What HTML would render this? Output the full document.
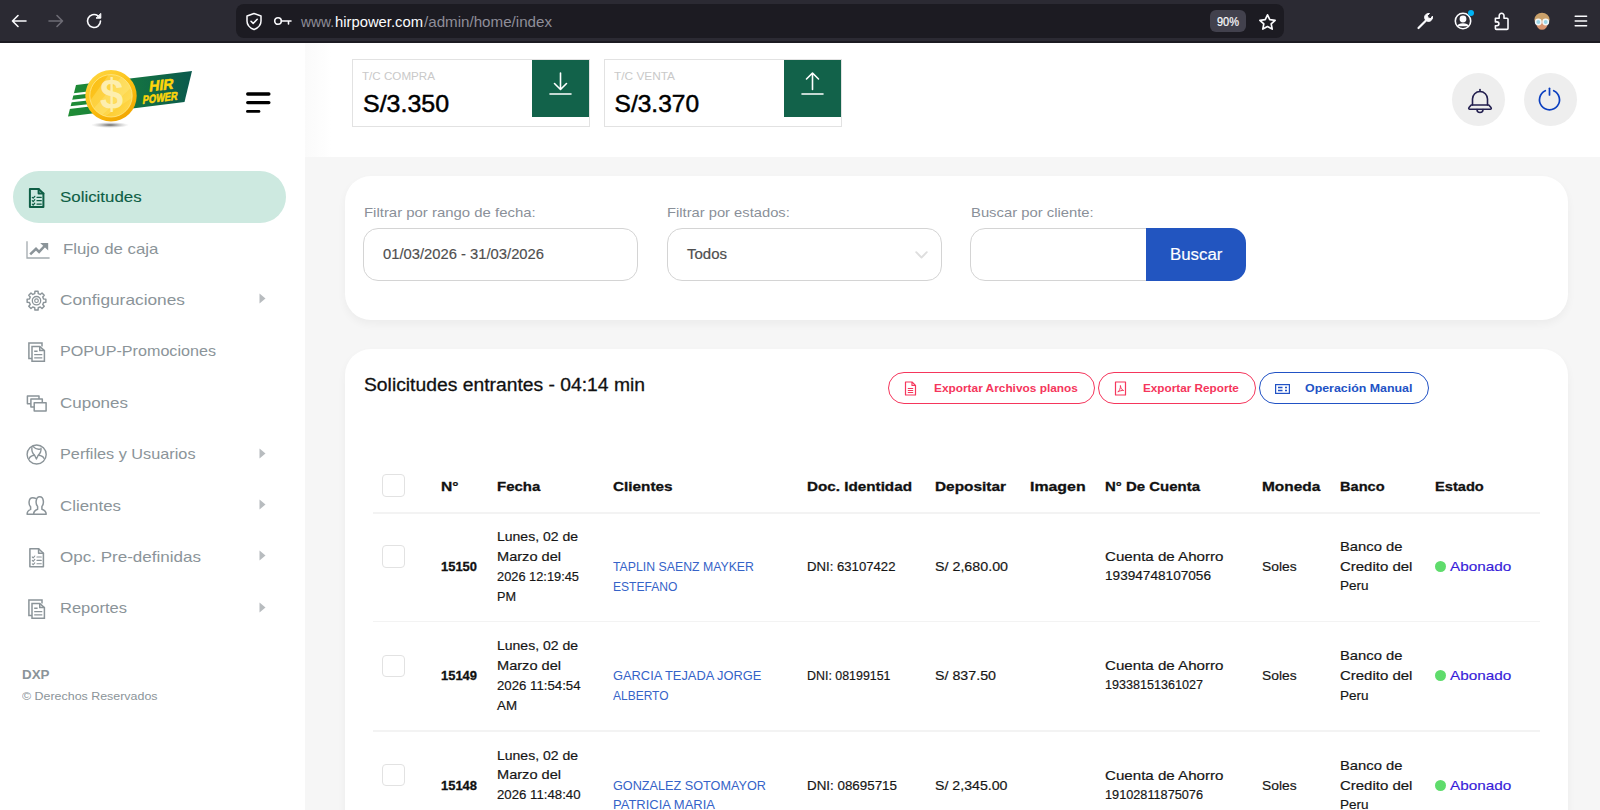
<!DOCTYPE html>
<html lang="es"><head><meta charset="utf-8"><title>HirPower Admin</title>
<style>
*{box-sizing:border-box;margin:0;padding:0}
html,body{width:1600px;height:810px;overflow:hidden;background:#f6f6f6;font-family:"Liberation Sans",sans-serif;}
.t{position:absolute;white-space:pre;display:block;transform-origin:0 50%}
.abs{position:absolute}
#chrome{position:absolute;left:0;top:0;width:1600px;height:43px;background:#2b2a33;border-bottom:2px solid #1b1a22}
#url{position:absolute;left:236px;top:4px;width:1048px;height:34px;border-radius:8px;background:#1c1b22}
#side{position:absolute;left:0;top:43px;width:305px;height:767px;background:#fff}
#head{position:absolute;left:305px;top:43px;width:1295px;height:114px;background:#fff}
.card{position:absolute;background:#fff;border-radius:26px;box-shadow:0 4px 9px rgba(0,0,0,.045)}
.tc{position:absolute;top:59px;height:68px;width:238px;border:1px solid #e2e2e2;background:#fff}
.tc i{position:absolute;right:0;top:0;width:57px;height:57px;background:#12624a;display:block}
.inp{position:absolute;top:228px;height:53px;border:1px solid #d4d4d4;border-radius:15px;background:#fff}
.cb{position:absolute;left:382.200px;width:22.600px;height:22.600px;border:1.500px solid #e2e2e2;border-radius:4px;background:#fff}
.hr{position:absolute;left:373px;width:1167px;height:1.500px;background:#f3f3f3}
.pill{position:absolute;top:372px;height:32px;border-radius:16px;border:1px solid #f5365c;background:#fff}
.circ{position:absolute;top:73px;width:53px;height:53px;border-radius:50%;background:#eeeeee}
.dot{position:absolute;left:1435px;width:11px;height:11px;border-radius:50%;background:#5fdc6c}
svg{position:absolute;overflow:visible}
#root{position:absolute;left:0;top:0;width:1600px;height:810px;overflow:hidden;background:#f6f6f6}
</style></head><body><div id="root">
<div id="chrome"><div id="url"></div>
<svg style="left:10px;top:12px" width="18" height="18" viewBox="0 0 18 18" fill="none" stroke="#fbfbfe" stroke-width="1.6" stroke-linecap="round" stroke-linejoin="round"><path d="M16 9H2.5M8 3.5L2.5 9 8 14.500"/></svg>
<svg style="left:47px;top:12px" width="18" height="18" viewBox="0 0 18 18" fill="none" stroke="#6d6c75" stroke-width="1.6" stroke-linecap="round" stroke-linejoin="round"><path d="M2 9h13.500M10 3.500L15.500 9 10 14.500"/></svg>
<svg style="left:85px;top:12px" width="18" height="18" viewBox="0 0 18 18" fill="none" stroke="#fbfbfe" stroke-width="1.6" stroke-linecap="round" stroke-linejoin="round"><path d="M15.500 9A6.500 6.500 0 1 1 12.800 3.700"/><path d="M15.800 1.800v4.400h-4.400z" fill="#fbfbfe" stroke-width="1"/></svg>
<svg style="left:245px;top:12px" width="18" height="19" viewBox="0 0 18 19" fill="none" stroke="#fbfbfe" stroke-width="1.5" stroke-linejoin="round" stroke-linecap="round"><path d="M9 1.500L2 4v5c0 4 3 7 7 8.500 4-1.500 7-4.500 7-8.500V4z"/><path d="M6 9.200l2.200 2.200 4-4.200"/></svg>
<svg style="left:273px;top:14px" width="20" height="14" viewBox="0 0 20 14" fill="none" stroke="#fbfbfe" stroke-width="1.6" stroke-linecap="round"><circle cx="5" cy="7" r="3.300"/><path d="M8.500 7H18M15.500 7v3"/></svg>
<span class="t" style="left:301.00px;top:12.48px;font-size:14.5px;line-height:20px;color:#8f8e99;transform:scaleX(0.9526);">www.</span>
<span class="t" style="left:335.00px;top:12.48px;font-size:14.5px;line-height:20px;color:#fbfbfe;transform:scaleX(1.0205);">hirpower.com</span>
<span class="t" style="left:424.00px;top:12.48px;font-size:14.5px;line-height:20px;color:#8f8e99;transform:scaleX(1.0448);">/admin/home/index</span>
<div class="abs" style="left:1209.600px;top:10px;width:36.800px;height:22px;border-radius:6px;background:#42414d"></div>
<span class="t" style="left:1216.80px;top:11.84px;font-size:12px;line-height:20px;color:#fbfbfe;transform:scaleX(0.9160);-webkit-text-stroke:0.2px #fbfbfe;">90%</span>
<svg style="left:1258px;top:13.200px" width="19" height="18" viewBox="0 0 19 18" fill="none" stroke="#fbfbfe" stroke-width="1.700" stroke-linejoin="round"><path d="M9.500 1.800l2.300 4.800 5.300.700-3.900 3.600 1 5.200-4.700-2.600-4.700 2.600 1-5.200L1.900 7.300l5.300-.700z"/></svg>
<svg style="left:1416px;top:12px" width="19" height="18" viewBox="0 0 19 18" fill="none" stroke="#fbfbfe" stroke-width="2.200" stroke-linecap="round"><path d="M2.500 16L10 8.500"/><path d="M16.500 4.500a4 4 0 1 1-3-3l-2 2 .5 2.500 2.500.5z" fill="#fbfbfe" stroke-width="1"/></svg>
<svg style="left:1454px;top:12px" width="18" height="18" viewBox="0 0 18 18" fill="none" stroke="#fbfbfe" stroke-width="1.600"><circle cx="9" cy="9" r="7.700"/><circle cx="9" cy="7" r="2.600" fill="#fbfbfe"/><path d="M4 14.300c1-3 9-3 10 0" fill="#fbfbfe"/></svg>
<div class="abs" style="left:1468px;top:10px;width:6px;height:6px;border-radius:50%;background:#00b3f4"></div>
<svg style="left:1493px;top:11px" width="18" height="20" viewBox="0 0 18 20" fill="none" stroke="#fbfbfe" stroke-width="1.600" stroke-linejoin="round"><path d="M2.400 7.300H6.200V4.700a2.400 2.400 0 1 1 4.800 0V7.300H14a1 1 0 0 1 1 1V17.400a1 1 0 0 1-1 1H3.400a1 1 0 0 1-1-1V14.700H4a1.900 1.900 0 0 0 0-3.800H2.400z"/></svg>
<svg style="left:1532.500px;top:11.500px" width="18" height="19" viewBox="0 0 18 19"><ellipse cx="9" cy="7.500" rx="7.600" ry="6.800" fill="#c9a06a"/><ellipse cx="9" cy="11.500" rx="5.700" ry="6.300" fill="#d9946e"/><path d="M3 6.500c2-3 10-3 12 0l-1 2.500H4z" fill="#c9a06a"/><circle cx="5.300" cy="10" r="2.700" fill="#9ad4e6" stroke="#f2f6f8" stroke-width="1.500"/><circle cx="12.700" cy="10" r="2.700" fill="#9ad4e6" stroke="#f2f6f8" stroke-width="1.500"/></svg>
<svg style="left:1574px;top:14px" width="14" height="14" viewBox="0 0 14 14" stroke="#fbfbfe" stroke-width="1.500" stroke-linecap="round"><path d="M1.200 2.200h11.400M1.200 7h11.400M1.200 11.800h11.400"/></svg>
</div>
<div id="side"></div><div id="head"><div class="abs" style="left:0;top:0;width:26px;height:114px;background:linear-gradient(90deg,#fafafa,#fff)"></div></div>
<svg style="left:50px;top:55px" width="160" height="80" viewBox="0 0 160 80">
<defs>
<linearGradient id="gb" x1="0" y1="0" x2="1" y2="0"><stop offset="0" stop-color="#1f8d35"/><stop offset=".45" stop-color="#167840"/><stop offset="1" stop-color="#0a594d"/></linearGradient>
<linearGradient id="gr" x1="0.2" y1="0" x2="0.8" y2="1"><stop offset="0" stop-color="#ffd640"/><stop offset=".55" stop-color="#fbbd0e"/><stop offset="1" stop-color="#f0a300"/></linearGradient>
<linearGradient id="gc" x1="0" y1="0.2" x2="1" y2="0.8"><stop offset="0" stop-color="#fbbf14"/><stop offset=".5" stop-color="#fdc828"/><stop offset="1" stop-color="#ffd94e"/></linearGradient>
<radialGradient id="gs" cx=".5" cy=".5" r=".5"><stop offset="0" stop-color="#444" stop-opacity=".85"/><stop offset=".6" stop-color="#888" stop-opacity=".35"/><stop offset="1" stop-color="#aaa" stop-opacity="0"/></radialGradient>
<clipPath id="cc"><circle cx="61" cy="40.800" r="21.200"/></clipPath>
</defs>
<ellipse cx="60" cy="70" rx="19" ry="3" fill="url(#gs)"/>
<path d="M26 30L142 16 134.500 47 18 61.500z" fill="url(#gb)"/>
<path d="M15 39.300L40 36.300 40 38.500 15 41.500zM13 45.800L40 42.800 40 45.200 13 48.200zM11 52.300L40 49 40 51.600 11 55z" fill="#fff"/>
<circle cx="61" cy="40.800" r="25.700" fill="url(#gr)"/>
<circle cx="61" cy="40.800" r="21.200" fill="url(#gc)"/>
<g clip-path="url(#cc)"><path d="M62 15L100 15 100 30 40 72 30 60z" fill="#ffe773" opacity=".38"/><path d="M75 18L90 24 46 66 38 60z" fill="#fff3a0" opacity=".25"/></g>
<circle cx="61" cy="40.800" r="21.200" fill="none" stroke="#ffe98c" stroke-width=".9" opacity=".85"/>
<text x="61.700" y="54" font-family="Liberation Sans, sans-serif" font-weight="700" font-size="42" text-anchor="middle" fill="#fdf0b4" opacity=".95">$</text>
<g transform="rotate(-7 112 36) skewX(-14)" font-family="Liberation Sans, sans-serif" font-weight="700" fill="#ffd60a" stroke="#ffd60a" stroke-width=".55">
<text x="107.500" y="35" font-size="14.500" textLength="24.500" lengthAdjust="spacingAndGlyphs">HIR</text>
<text x="102.500" y="46.500" font-size="11.500" textLength="35" lengthAdjust="spacingAndGlyphs">POWER</text>
</g>
</svg>
<svg style="left:244px;top:90px" width="30" height="26" viewBox="0 0 30 26" stroke="#000" stroke-width="3.300" stroke-linecap="round"><path d="M3.700 4h21.200M3.700 12.600h21.200"/><path d="M3.400 21.400h11.600" stroke-width="2.700"/></svg>
<div class="abs" style="left:12.600px;top:171.300px;width:273.800px;height:51.300px;border-radius:26px;background:#cde9e0"></div>
<span class="t" style="left:60.00px;top:187.40px;font-size:15px;line-height:20px;color:#0e5e45;transform:scaleX(1.1249);-webkit-text-stroke:0.12px #0e5e45;">Solicitudes</span>
<span class="t" style="left:63.00px;top:238.70px;font-size:15px;line-height:20px;color:#8b9499;transform:scaleX(1.1217);">Flujo de caja</span>
<span class="t" style="left:60.00px;top:290.10px;font-size:15px;line-height:20px;color:#8b9499;transform:scaleX(1.1531);">Configuraciones</span>
<svg style="left:259px;top:293.2px" width="7" height="11" viewBox="0 0 7 11"><path d="M.5.500L6.500 5.500.5 10.500z" fill="#b8bcbf"/></svg>
<span class="t" style="left:60.00px;top:341.40px;font-size:15px;line-height:20px;color:#8b9499;transform:scaleX(1.0755);">POPUP-Promociones</span>
<span class="t" style="left:60.00px;top:392.80px;font-size:15px;line-height:20px;color:#8b9499;transform:scaleX(1.1325);">Cupones</span>
<span class="t" style="left:60.00px;top:444.40px;font-size:15px;line-height:20px;color:#8b9499;transform:scaleX(1.0837);">Perfiles y Usuarios</span>
<svg style="left:259px;top:447.5px" width="7" height="11" viewBox="0 0 7 11"><path d="M.5.500L6.500 5.500.5 10.500z" fill="#b8bcbf"/></svg>
<span class="t" style="left:60.00px;top:495.70px;font-size:15px;line-height:20px;color:#8b9499;transform:scaleX(1.1256);">Clientes</span>
<svg style="left:259px;top:498.8px" width="7" height="11" viewBox="0 0 7 11"><path d="M.5.500L6.500 5.500.5 10.500z" fill="#b8bcbf"/></svg>
<span class="t" style="left:60.00px;top:547.10px;font-size:15px;line-height:20px;color:#8b9499;transform:scaleX(1.1350);">Opc. Pre-definidas</span>
<svg style="left:259px;top:550.2px" width="7" height="11" viewBox="0 0 7 11"><path d="M.5.500L6.500 5.500.5 10.500z" fill="#b8bcbf"/></svg>
<span class="t" style="left:60.00px;top:598.40px;font-size:15px;line-height:20px;color:#8b9499;transform:scaleX(1.1008);">Reportes</span>
<svg style="left:259px;top:601.5px" width="7" height="11" viewBox="0 0 7 11"><path d="M.5.500L6.500 5.500.5 10.500z" fill="#b8bcbf"/></svg>
<svg style="left:0;top:0" width="305" height="810" viewBox="0 0 305 810">
<g fill="none" stroke="#0e5e45" stroke-width="2.0" stroke-linejoin="round" stroke-linecap="round"><path d="M29.9,189.10 H38.6 L43.4,193.60 V207.10 H29.9 Z"/><path d="M38.6,189.10 V193.60 H43.4"/><g stroke-width="1.2"><path d="M32.3,197.30 l0.9,0.9 l1.6,-1.9"/><path d="M37,197.30 H41.3"/><path d="M32.3,200.70 l0.9,0.9 l1.6,-1.9"/><path d="M37,200.70 H41.3"/><path d="M32.3,204.10 l0.9,0.9 l1.6,-1.9"/><path d="M37,204.10 H41.3"/></g></g>
<g fill="none" stroke-linejoin="miter"><path d="M27,241.3 V258 H49.6" stroke="#a3aaae" stroke-width="1.3"/><path d="M30.2,254.4 L36,248.8 L39.1,251.9 L44.6,246" stroke="#8b9499" stroke-width="2.5"/><path d="M40.2,243 H48.2 V250.4 Z" fill="#8b9499" stroke="none"/></g>
<g fill="none" stroke="#8b9499" stroke-width="1.45" stroke-linejoin="round"><path d="M34.74,293.62 L34.94,291.33 L38.06,291.33 L38.26,293.62 L40.27,294.45 L42.02,292.97 L44.23,295.18 L42.75,296.93 L43.58,298.94 L45.87,299.14 L45.87,302.26 L43.58,302.46 L42.75,304.47 L44.23,306.22 L42.02,308.43 L40.27,306.95 L38.26,307.78 L38.06,310.07 L34.94,310.07 L34.74,307.78 L32.73,306.95 L30.98,308.43 L28.77,306.22 L30.25,304.47 L29.42,302.46 L27.13,302.26 L27.13,299.14 L29.42,298.94 L30.25,296.93 L28.77,295.18 L30.98,292.97 L32.73,294.45Z"/><circle cx="36.5" cy="300.7" r="4.2" stroke-width="1.3"/><circle cx="36.5" cy="300.7" r="1.8" stroke-width="1.2"/></g>
<g fill="none" stroke="#8b9499" stroke-width="1.5" stroke-linejoin="miter"><path d="M42,346.40 V343.00 H28.9 V358.50 H32"/><path d="M32,346.40 H39.75 L44.4,350.60 V361.20 H32 Z" fill="#fff"/><path d="M39.75,346.40 V350.60 H44.4"/><path d="M34.2,351.20 H37.6 M34.2,354.60 H42.3 M34.2,357.90 H42.3" stroke-width="1.4"/></g>
<g fill="#fff" stroke="#8b9499" stroke-width="1.5" stroke-linejoin="round"><rect x="27.4" y="395.9" width="11.6" height="7.9"/><rect x="30.9" y="399.1" width="11.4" height="7.9"/><rect x="34.2" y="402.8" width="11.9" height="8.2"/></g>
<g fill="none" stroke="#8b9499" stroke-width="1.4" stroke-linecap="round" stroke-linejoin="round"><circle cx="36.65" cy="454.5" r="9.55"/><path d="M31.900,447.800 C31.600,450.600 32.100,453.200 34.600,455.200 L36.400,459 L38.200,455.200 C40.700,453.200 41.200,450.600 41,448.300"/><path d="M33.200,446.600 C35,448.600 37.500,449.700 40.100,449.100"/><path d="M29.2,458.6 C30,456.5 32,455.6 34.4,455.3 M44.1,458.6 C43.3,456.5 41.3,455.6 38.5,455.3"/></g>
<g fill="none" stroke="#8b9499" stroke-width="1.5" stroke-linejoin="round" stroke-linecap="round"><path d="M35.6,498.3 C34.8,497.8 33.7,497.7 32.7,497.7 C28.2,497.7 28.4,504.8 30.6,506.9 L30.6,509.4 C28.5,510.2 27.1,511.5 27.1,514.2 L33.6,514.2"/><path d="M37.6,506.5 C35.4,504.5 35.3,496.8 39.75,496.8 C44.2,496.8 44.1,504.5 41.9,506.500 L41.9,509.2 C44,510 46.2,511.2 46.2,514.2 L33.6,514.2 C33.6,511.5 35.500,510 37.6,509.2 Z" fill="#fff"/></g>
<g fill="none" stroke="#8b9499" stroke-width="1.55" stroke-linejoin="round" stroke-linecap="round"><path d="M29.9,548.80 H38.6 L43.4,553.30 V566.80 H29.9 Z"/><path d="M38.6,548.80 V553.30 H43.4"/><g stroke-width="1.1"><path d="M32.3,557.00 l0.9,0.9 l1.6,-1.9"/><path d="M37,557.00 H41.3"/><path d="M32.3,560.40 l0.9,0.9 l1.6,-1.9"/><path d="M37,560.40 H41.3"/><path d="M32.3,563.80 l0.9,0.9 l1.6,-1.9"/><path d="M37,563.80 H41.3"/></g></g>
<g fill="none" stroke="#8b9499" stroke-width="1.5" stroke-linejoin="miter"><path d="M42,603.40 V600.00 H28.9 V615.50 H32"/><path d="M32,603.40 H39.75 L44.4,607.60 V618.20 H32 Z" fill="#fff"/><path d="M39.75,603.40 V607.60 H44.4"/><path d="M34.2,608.20 H37.6 M34.2,611.60 H42.3 M34.2,614.90 H42.3" stroke-width="1.4"/></g>
</svg>
<span class="t" style="left:22.00px;top:664.50px;font-size:13px;line-height:20px;color:#8b9499;font-weight:700;transform:scaleX(1.0288);">DXP</span>
<span class="t" style="left:22.00px;top:686.02px;font-size:11.5px;line-height:20px;color:#8b9499;transform:scaleX(1.0802);">© Derechos Reservados</span>
<div class="tc" style="left:352px"><i></i></div>
<span class="t" style="left:362.30px;top:66.39px;font-size:11px;line-height:20px;color:#c9c9c9;transform:scaleX(1.0571);">T/C COMPRA</span>
<span class="t" style="left:362.60px;top:94.21px;font-size:24.5px;line-height:20px;color:#000;transform:scaleX(1.0183);-webkit-text-stroke:0.5px #000;">S/3.350</span>
<div class="tc" style="left:604px"><i></i></div>
<span class="t" style="left:614.30px;top:66.39px;font-size:11px;line-height:20px;color:#c9c9c9;transform:scaleX(1.0771);">T/C VENTA</span>
<span class="t" style="left:614.60px;top:94.21px;font-size:24.5px;line-height:20px;color:#000;-webkit-text-stroke:0.5px #000;">S/3.370</span>
<svg style="left:548px;top:71px" width="25" height="25" viewBox="0 0 25 25" fill="none" stroke="#fff" stroke-width="1.600" stroke-linecap="round" stroke-linejoin="round"><path d="M12.500 2v16M6.500 12.500l6 6 6-6M2 23h21"/></svg>
<svg style="left:800px;top:71px" width="25" height="25" viewBox="0 0 25 25" fill="none" stroke="#fff" stroke-width="1.600" stroke-linecap="round" stroke-linejoin="round"><path d="M12.500 18.500v-16M6.500 8l6-6 6 6M2 23h21"/></svg>
<div class="circ" style="left:1452px"></div><div class="circ" style="left:1524.200px"></div>
<svg style="left:1467px;top:88px" width="26" height="26" viewBox="0 0 26 26" fill="none" stroke="#231f4f" stroke-width="1.600" stroke-linecap="round" stroke-linejoin="round"><path d="M13 1.500v2"/><path d="M5.500 17v-6a7.500 7.500 0 0 1 15 0v6"/><path d="M4.200 17H21.800L24 19.600a1 1 0 0 1-.8 1.700H2.800a1 1 0 0 1-.8-1.700z"/><path d="M10 21.500a3 3 0 0 0 6 0"/></svg>
<svg style="left:1536.500px;top:86px" width="26" height="26" viewBox="0 0 26 26" fill="none" stroke="#0b3fc0" stroke-width="1.700" stroke-linecap="round"><path d="M12.500 2.300v6.700"/><path d="M8.300 4.700a10 10 0 1 0 8.400 0"/></svg>
<div class="card" style="left:344.500px;top:176px;width:1223.500px;height:144px"></div>
<span class="t" style="left:363.50px;top:203.09px;font-size:13.3px;line-height:20px;color:#8a9099;transform:scaleX(1.1220);">Filtrar por rango de fecha:</span>
<span class="t" style="left:667.00px;top:203.09px;font-size:13.3px;line-height:20px;color:#8a9099;transform:scaleX(1.1076);">Filtrar por estados:</span>
<span class="t" style="left:970.60px;top:203.09px;font-size:13.3px;line-height:20px;color:#8a9099;transform:scaleX(1.1140);">Buscar por cliente:</span>
<div class="inp" style="left:362.700px;width:275.800px"></div>
<div class="inp" style="left:667px;width:274.500px"></div>
<div class="inp" style="left:970.200px;width:200px"></div>
<div class="abs" style="left:1145.500px;top:228px;width:100px;height:53px;background:#2255c0;border-radius:0 15px 15px 0"></div>
<span class="t" style="left:383.00px;top:243.95px;font-size:14px;line-height:20px;color:#4f4f4f;transform:scaleX(1.0552);-webkit-text-stroke:0.15px #4f4f4f;">01/03/2026 - 31/03/2026</span>
<span class="t" style="left:686.80px;top:243.95px;font-size:14px;line-height:20px;color:#4f4f4f;transform:scaleX(1.0707);-webkit-text-stroke:0.2px #4f4f4f;">Todos</span>
<svg style="left:914.500px;top:250.500px" width="13" height="8" viewBox="0 0 13 8" fill="none" stroke="#dedede" stroke-width="1.900" stroke-linecap="round" stroke-linejoin="round"><path d="M1.200 1.200l5.300 5.300 5.300-5.300"/></svg>
<span class="t" style="left:1169.50px;top:245.19px;font-size:15.6px;line-height:20px;color:#fff;transform:scaleX(1.0792);-webkit-text-stroke:0.15px #fff;">Buscar</span>
<div class="card" style="left:344.500px;top:348.500px;width:1223.500px;height:520px"></div>
<span class="t" style="left:363.50px;top:375.44px;font-size:17.5px;line-height:20px;color:#111;transform:scaleX(1.1026);-webkit-text-stroke:0.28px #111;">Solicitudes entrantes - 04:14 min</span>
<div class="pill" style="left:888px;width:206.500px"></div>
<div class="pill" style="left:1098px;width:158px"></div>
<div class="pill" style="left:1259px;width:170px;border-color:#2152c5"></div>
<span class="t" style="left:934.00px;top:378.35px;font-size:11.7px;line-height:20px;color:#f5365c;font-weight:700;transform:scaleX(1.0144);">Exportar Archivos planos</span>
<span class="t" style="left:1143.40px;top:378.35px;font-size:11.7px;line-height:20px;color:#f5365c;font-weight:700;transform:scaleX(1.0045);">Exportar Reporte</span>
<span class="t" style="left:1305.00px;top:378.35px;font-size:11.7px;line-height:20px;color:#2152c5;font-weight:700;transform:scaleX(1.0599);">Operación Manual</span>
<svg style="left:904px;top:381px" width="13" height="15" viewBox="0 0 13 15" fill="none" stroke="#f5365c" stroke-width="1.200" stroke-linejoin="round"><path d="M1.500 1h6.500l3.500 3.500V14h-10z"/><path d="M8 1v3.500h3.500"/><path d="M3.800 7.500h5.400M3.800 9.500h5.400M3.800 11.500h5.400" stroke-width="1"/></svg>
<svg style="left:1113.500px;top:381px" width="13" height="15" viewBox="0 0 13 15" fill="none" stroke="#f5365c" stroke-width="1.200" stroke-linejoin="round"><rect x="1.500" y="1" width="10" height="13"/><path d="M3.800 11c1.500-1 3-4 2.600-6.500M6.400 4.500c.2 2.500 1.600 4.500 3.200 5M3.800 11c1.800-1.200 4-1.700 5.800-1.500" stroke-width="1"/></svg>
<svg style="left:1274.500px;top:383.500px" width="15" height="10" viewBox="0 0 15 10" fill="none" stroke="#2152c5" stroke-width="1.200"><rect x=".6" y=".6" width="13.800" height="8.800"/><path d="M3 3.500h4.500M3 6.500h4.500M10 3.500h2M10 6.500h2" stroke-width="1.400"/></svg>
<div class="cb" style="top:474.200px"></div>
<span class="t" style="left:441.00px;top:476.99px;font-size:13.6px;line-height:20px;color:#111;font-weight:700;transform:scaleX(1.1468);-webkit-text-stroke:0.3px #111;">N°</span>
<span class="t" style="left:497.00px;top:476.99px;font-size:13.6px;line-height:20px;color:#111;font-weight:700;transform:scaleX(1.1016);-webkit-text-stroke:0.3px #111;">Fecha</span>
<span class="t" style="left:613.00px;top:476.99px;font-size:13.6px;line-height:20px;color:#111;font-weight:700;transform:scaleX(1.1246);-webkit-text-stroke:0.3px #111;">Clientes</span>
<span class="t" style="left:807.00px;top:476.99px;font-size:13.6px;line-height:20px;color:#111;font-weight:700;transform:scaleX(1.1207);-webkit-text-stroke:0.3px #111;">Doc. Identidad</span>
<span class="t" style="left:935.00px;top:476.99px;font-size:13.6px;line-height:20px;color:#111;font-weight:700;transform:scaleX(1.1319);-webkit-text-stroke:0.3px #111;">Depositar</span>
<span class="t" style="left:1030.00px;top:476.99px;font-size:13.6px;line-height:20px;color:#111;font-weight:700;transform:scaleX(1.1677);-webkit-text-stroke:0.3px #111;">Imagen</span>
<span class="t" style="left:1105.00px;top:476.99px;font-size:13.6px;line-height:20px;color:#111;font-weight:700;transform:scaleX(1.1009);-webkit-text-stroke:0.3px #111;">N° De Cuenta</span>
<span class="t" style="left:1262.00px;top:476.99px;font-size:13.6px;line-height:20px;color:#111;font-weight:700;transform:scaleX(1.1347);-webkit-text-stroke:0.3px #111;">Moneda</span>
<span class="t" style="left:1339.70px;top:476.99px;font-size:13.6px;line-height:20px;color:#111;font-weight:700;transform:scaleX(1.0730);-webkit-text-stroke:0.3px #111;">Banco</span>
<span class="t" style="left:1434.80px;top:476.99px;font-size:13.6px;line-height:20px;color:#111;font-weight:700;transform:scaleX(1.0763);-webkit-text-stroke:0.3px #111;">Estado</span>
<div class="hr" style="top:512px"></div>
<div class="cb" style="top:545.3px"></div>
<span class="t" style="left:441.00px;top:557.19px;font-size:13.6px;line-height:20px;color:#111;font-weight:700;transform:scaleX(0.9519);-webkit-text-stroke:0.3px #111;">15150</span>
<span class="t" style="left:497.00px;top:527.00px;font-size:13.0px;line-height:20px;color:#161616;transform:scaleX(1.0775);-webkit-text-stroke:0.18px #161616;">Lunes, 02 de</span>
<span class="t" style="left:497.00px;top:546.90px;font-size:13.0px;line-height:20px;color:#161616;transform:scaleX(1.1213);-webkit-text-stroke:0.18px #161616;">Marzo del</span>
<span class="t" style="left:497.00px;top:566.80px;font-size:13.0px;line-height:20px;color:#161616;transform:scaleX(0.9863);-webkit-text-stroke:0.18px #161616;">2026 12:19:45</span>
<span class="t" style="left:497.00px;top:586.70px;font-size:13.0px;line-height:20px;color:#161616;transform:scaleX(0.9743);-webkit-text-stroke:0.18px #161616;">PM</span>
<span class="t" style="left:613.00px;top:557.13px;font-size:12.6px;line-height:20px;color:#3563c8;transform:scaleX(0.9760);">TAPLIN SAENZ MAYKER</span>
<span class="t" style="left:613.00px;top:576.73px;font-size:12.6px;line-height:20px;color:#3563c8;transform:scaleX(0.9596);">ESTEFANO</span>
<span class="t" style="left:807.00px;top:557.00px;font-size:13.0px;line-height:20px;color:#161616;transform:scaleX(1.0120);-webkit-text-stroke:0.18px #161616;">DNI: 63107422</span>
<span class="t" style="left:935.00px;top:557.00px;font-size:13.0px;line-height:20px;color:#161616;transform:scaleX(1.0978);-webkit-text-stroke:0.18px #161616;">S/ 2,680.00</span>
<span class="t" style="left:1105.00px;top:547.00px;font-size:13.0px;line-height:20px;color:#161616;transform:scaleX(1.1628);-webkit-text-stroke:0.18px #161616;">Cuenta de Ahorro</span>
<span class="t" style="left:1105.00px;top:566.00px;font-size:13.0px;line-height:20px;color:#161616;transform:scaleX(1.0472);-webkit-text-stroke:0.18px #161616;">19394748107056</span>
<span class="t" style="left:1262.00px;top:557.00px;font-size:13.0px;line-height:20px;color:#161616;transform:scaleX(1.0640);-webkit-text-stroke:0.18px #161616;">Soles</span>
<span class="t" style="left:1340.00px;top:537.00px;font-size:13.0px;line-height:20px;color:#161616;transform:scaleX(1.1359);-webkit-text-stroke:0.18px #161616;">Banco de</span>
<span class="t" style="left:1340.00px;top:557.00px;font-size:13.0px;line-height:20px;color:#161616;transform:scaleX(1.1516);-webkit-text-stroke:0.18px #161616;">Credito del</span>
<span class="t" style="left:1340.00px;top:576.30px;font-size:13.0px;line-height:20px;color:#161616;transform:scaleX(1.0415);-webkit-text-stroke:0.18px #161616;">Peru</span>
<div class="dot" style="top:561.0px"></div>
<span class="t" style="left:1450.40px;top:557.00px;font-size:13.0px;line-height:20px;color:#371cd9;transform:scaleX(1.1758);-webkit-text-stroke:0.15px #371cd9;">Abonado</span>
<div class="hr" style="top:620.8px"></div>
<div class="cb" style="top:654.6px"></div>
<span class="t" style="left:441.00px;top:666.49px;font-size:13.6px;line-height:20px;color:#111;font-weight:700;transform:scaleX(0.9519);-webkit-text-stroke:0.3px #111;">15149</span>
<span class="t" style="left:497.00px;top:636.30px;font-size:13.0px;line-height:20px;color:#161616;transform:scaleX(1.0775);-webkit-text-stroke:0.18px #161616;">Lunes, 02 de</span>
<span class="t" style="left:497.00px;top:656.20px;font-size:13.0px;line-height:20px;color:#161616;transform:scaleX(1.1213);-webkit-text-stroke:0.18px #161616;">Marzo del</span>
<span class="t" style="left:497.00px;top:676.10px;font-size:13.0px;line-height:20px;color:#161616;transform:scaleX(1.0162);-webkit-text-stroke:0.18px #161616;">2026 11:54:54</span>
<span class="t" style="left:497.00px;top:696.00px;font-size:13.0px;line-height:20px;color:#161616;transform:scaleX(1.0256);-webkit-text-stroke:0.18px #161616;">AM</span>
<span class="t" style="left:613.00px;top:666.43px;font-size:12.6px;line-height:20px;color:#3563c8;transform:scaleX(1.0213);">GARCIA TEJADA JORGE</span>
<span class="t" style="left:613.00px;top:686.03px;font-size:12.6px;line-height:20px;color:#3563c8;transform:scaleX(0.9510);">ALBERTO</span>
<span class="t" style="left:807.00px;top:666.30px;font-size:13.0px;line-height:20px;color:#161616;transform:scaleX(0.9548);-webkit-text-stroke:0.18px #161616;">DNI: 08199151</span>
<span class="t" style="left:935.00px;top:666.30px;font-size:13.0px;line-height:20px;color:#161616;transform:scaleX(1.0960);-webkit-text-stroke:0.18px #161616;">S/ 837.50</span>
<span class="t" style="left:1105.00px;top:656.30px;font-size:13.0px;line-height:20px;color:#161616;transform:scaleX(1.1628);-webkit-text-stroke:0.18px #161616;">Cuenta de Ahorro</span>
<span class="t" style="left:1105.00px;top:675.30px;font-size:13.0px;line-height:20px;color:#161616;transform:scaleX(0.9682);-webkit-text-stroke:0.18px #161616;">19338151361027</span>
<span class="t" style="left:1262.00px;top:666.30px;font-size:13.0px;line-height:20px;color:#161616;transform:scaleX(1.0640);-webkit-text-stroke:0.18px #161616;">Soles</span>
<span class="t" style="left:1340.00px;top:646.30px;font-size:13.0px;line-height:20px;color:#161616;transform:scaleX(1.1359);-webkit-text-stroke:0.18px #161616;">Banco de</span>
<span class="t" style="left:1340.00px;top:666.30px;font-size:13.0px;line-height:20px;color:#161616;transform:scaleX(1.1516);-webkit-text-stroke:0.18px #161616;">Credito del</span>
<span class="t" style="left:1340.00px;top:685.60px;font-size:13.0px;line-height:20px;color:#161616;transform:scaleX(1.0415);-webkit-text-stroke:0.18px #161616;">Peru</span>
<div class="dot" style="top:670.3px"></div>
<span class="t" style="left:1450.40px;top:666.30px;font-size:13.0px;line-height:20px;color:#371cd9;transform:scaleX(1.1758);-webkit-text-stroke:0.15px #371cd9;">Abonado</span>
<div class="hr" style="top:730.1px"></div>
<div class="cb" style="top:763.8px"></div>
<span class="t" style="left:441.00px;top:775.69px;font-size:13.6px;line-height:20px;color:#111;font-weight:700;transform:scaleX(0.9519);-webkit-text-stroke:0.3px #111;">15148</span>
<span class="t" style="left:497.00px;top:745.50px;font-size:13.0px;line-height:20px;color:#161616;transform:scaleX(1.0775);-webkit-text-stroke:0.18px #161616;">Lunes, 02 de</span>
<span class="t" style="left:497.00px;top:765.40px;font-size:13.0px;line-height:20px;color:#161616;transform:scaleX(1.1213);-webkit-text-stroke:0.18px #161616;">Marzo del</span>
<span class="t" style="left:497.00px;top:785.30px;font-size:13.0px;line-height:20px;color:#161616;transform:scaleX(1.0162);-webkit-text-stroke:0.18px #161616;">2026 11:48:40</span>
<span class="t" style="left:497.00px;top:805.20px;font-size:13.0px;line-height:20px;color:#161616;transform:scaleX(1.0256);-webkit-text-stroke:0.18px #161616;">AM</span>
<span class="t" style="left:613.00px;top:775.63px;font-size:12.6px;line-height:20px;color:#3563c8;transform:scaleX(1.0056);">GONZALEZ SOTOMAYOR</span>
<span class="t" style="left:613.00px;top:795.23px;font-size:12.6px;line-height:20px;color:#3563c8;transform:scaleX(1.0308);">PATRICIA MARIA</span>
<span class="t" style="left:807.00px;top:775.50px;font-size:13.0px;line-height:20px;color:#161616;transform:scaleX(1.0291);-webkit-text-stroke:0.18px #161616;">DNI: 08695715</span>
<span class="t" style="left:935.00px;top:775.50px;font-size:13.0px;line-height:20px;color:#161616;transform:scaleX(1.0903);-webkit-text-stroke:0.18px #161616;">S/ 2,345.00</span>
<span class="t" style="left:1105.00px;top:765.50px;font-size:13.0px;line-height:20px;color:#161616;transform:scaleX(1.1628);-webkit-text-stroke:0.18px #161616;">Cuenta de Ahorro</span>
<span class="t" style="left:1105.00px;top:784.50px;font-size:13.0px;line-height:20px;color:#161616;transform:scaleX(0.9775);-webkit-text-stroke:0.18px #161616;">19102811875076</span>
<span class="t" style="left:1262.00px;top:775.50px;font-size:13.0px;line-height:20px;color:#161616;transform:scaleX(1.0640);-webkit-text-stroke:0.18px #161616;">Soles</span>
<span class="t" style="left:1340.00px;top:755.50px;font-size:13.0px;line-height:20px;color:#161616;transform:scaleX(1.1359);-webkit-text-stroke:0.18px #161616;">Banco de</span>
<span class="t" style="left:1340.00px;top:775.50px;font-size:13.0px;line-height:20px;color:#161616;transform:scaleX(1.1516);-webkit-text-stroke:0.18px #161616;">Credito del</span>
<span class="t" style="left:1340.00px;top:794.80px;font-size:13.0px;line-height:20px;color:#161616;transform:scaleX(1.0415);-webkit-text-stroke:0.18px #161616;">Peru</span>
<div class="dot" style="top:779.5px"></div>
<span class="t" style="left:1450.40px;top:775.50px;font-size:13.0px;line-height:20px;color:#371cd9;transform:scaleX(1.1758);-webkit-text-stroke:0.15px #371cd9;">Abonado</span>
<div class="hr" style="top:839.3px"></div>
</div></body></html>
